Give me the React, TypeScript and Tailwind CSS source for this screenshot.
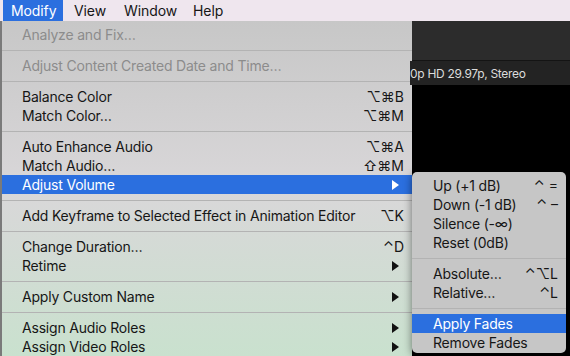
import React from "react"

type Item =
  | { sep: true }
  | { label: string; key?: string; sub?: boolean; disabled?: boolean; active?: boolean }

const mainItems: Item[] = [
  { label: "Analyze and Fix…", disabled: true },
  { sep: true },
  { label: "Adjust Content Created Date and Time…", disabled: true },
  { sep: true },
  { label: "Balance Color", key: "⌥⌘B" },
  { label: "Match Color…", key: "⌥⌘M" },
  { sep: true },
  { label: "Auto Enhance Audio", key: "⌥⌘A" },
  { label: "Match Audio…", key: "⇧⌘M" },
  { label: "Adjust Volume", sub: true, active: true },
  { sep: true },
  { label: "Add Keyframe to Selected Effect in Animation Editor", key: "⌥K" },
  { sep: true },
  { label: "Change Duration…", key: "⌃D" },
  { label: "Retime", sub: true },
  { sep: true },
  { label: "Apply Custom Name", sub: true },
  { sep: true },
  { label: "Assign Audio Roles", sub: true },
  { label: "Assign Video Roles", sub: true },
]

const volumeItems: Item[] = [
  { label: "Up (+1 dB)", key: "⌃ =" },
  { label: "Down (-1 dB)", key: "⌃ –" },
  { label: "Silence (-∞)" },
  { label: "Reset (0dB)" },
  { sep: true },
  { label: "Absolute…", key: "⌃⌥L" },
  { label: "Relative…", key: "⌃L" },
  { sep: true },
  { label: "Apply Fades", active: true },
  { label: "Remove Fades" },
]

const Arrow = ({ white }: { white?: boolean }) => (
  <svg width="7" height="10" viewBox="0 0 7 10">
    <path d="M0 0 L7 5 L0 10 Z" fill={white ? "#ffffff" : "#111111"} />
  </svg>
)

const Row = ({ item, padL, padR }: { item: Item; padL: string; padR: string }) => {
  if ("sep" in item) {
    return (
      <div className="h-[12px] flex items-center">
        <div className="h-[1px] w-full bg-[#b3b3b3]" />
      </div>
    )
  }
  const text = item.active ? "text-white" : item.disabled ? "text-[#8c8c8c]" : "text-[#161616]"
  return (
    <div
      className={`h-[19px] flex items-center justify-between ${padL} ${padR} ${text} ${
        item.active ? "bg-[#2b6fdf]" : ""
      }`}
    >
      <span className="tracking-[-0.2px]">{item.label}</span>
      {item.key && <span>{item.key}</span>}
      {item.sub && (
        <span className="mr-[5px] flex items-center">
          <Arrow white={item.active} />
        </span>
      )}
    </div>
  )
}

const App: React.FC = (): JSX.Element => {
  return (
    <div className="w-[570px] h-[356px] overflow-hidden relative bg-black font-['Inter','DejaVu_Sans',sans-serif] text-[14px] leading-none">
      {/* menubar */}
      <div className="h-[21px] flex items-center bg-[#efe6ee] text-[#161616] tracking-[-0.1px]">
        <div className="ml-[3px] w-[60px] h-full flex items-center pl-[8px] bg-[#2b6fdf] text-white">Modify</div>
        <div className="ml-[11px]">View</div>
        <div className="ml-[18px]">Window</div>
        <div className="ml-[16px]">Help</div>
      </div>

      <div className="flex h-[335px]">
        {/* Modify menu */}
        <div className="w-[412px] h-full pt-[4px] border-l-[2px] border-[#7a7a7a] bg-gradient-to-b from-[#c7c7c7] via-[#d9d7d9] to-[#c9e1ce]">
          {mainItems.map((it, i) => (
            <Row key={i} item={it} padL="pl-[20px]" padR="pr-[8px]" />
          ))}
        </div>

        {/* viewer behind */}
        <div className="flex-1 flex flex-col">
          <div className="h-[40px] bg-[#2c2c2c] border-b border-[#141414]" />
          <div className="h-[24px] bg-[#232323] flex items-center pt-[2px] text-[12px] tracking-[-0.3px] text-[#dcdcdc] -ml-[2px]">
            0p HD 29.97p, Stereo
          </div>
          <div className="flex-1 bg-black" />
        </div>
      </div>

      {/* Adjust Volume submenu */}
      <div className="absolute left-[412px] top-[172px] w-[154px] h-[181px] pt-[4px] rounded-[5px] bg-[#c6c6c6] shadow-[0_2px_8px_rgba(0,0,0,0.5)] overflow-hidden">
        {volumeItems.map((it, i) => (
          <Row key={i} item={it} padL="pl-[21px]" padR="pr-[8px]" />
        ))}
      </div>
    </div>
  )
}

export default App
